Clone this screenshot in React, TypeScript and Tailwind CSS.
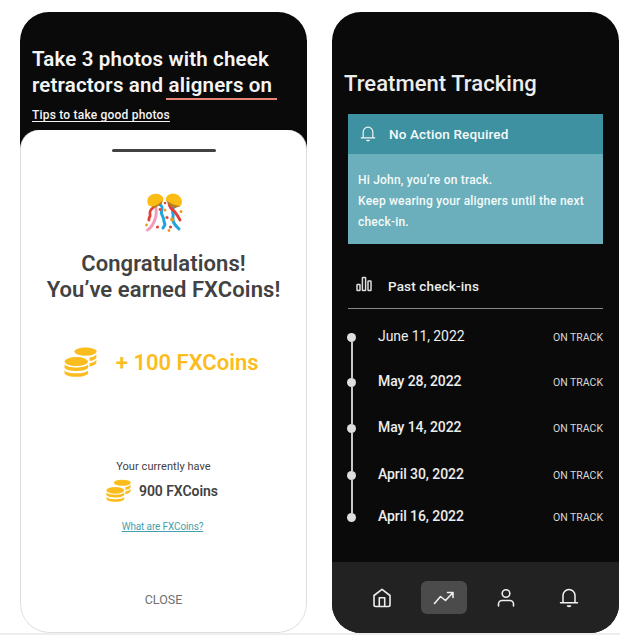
import React from "react";

const checkIns = [
  { date: "June 11, 2022", row: "h-[45px]", weight: "font-normal", last: false },
  { date: "May 28, 2022", row: "h-[46px]", weight: "font-medium", last: false },
  { date: "May 14, 2022", row: "h-[47px]", weight: "font-medium", last: false },
  { date: "April 30, 2022", row: "h-[42px]", weight: "font-medium", last: false },
  { date: "April 16, 2022", row: "h-[20px]", weight: "font-medium", last: true },
];

function Coins({ className }: { className: string }) {
  return (
    <svg viewBox="0 0 33 31" className={className} fill="#fbbd1e">
      <ellipse cx="21.5" cy="4.6" rx="11.2" ry="4.1" />
      <path d="M25.5 10.5Q30.5 9.8 32.4 7.4V10.5Q31.3 13 25.5 14.2ZM25.5 16.3Q30.5 15.4 32.4 13V15.8Q31.3 18.5 25.5 19.7Z" />
      <ellipse cx="12.3" cy="14.2" rx="13" ry="5.8" fill="#fff" />
      <ellipse cx="12.3" cy="14.6" rx="11.8" ry="4.5" />
      <path d="M.5 17.6C3.8 21.5 20.8 21.5 24.1 17.6V20.8C21.5 25.2 3.1 25.2.5 20.8Z" />
      <path d="M.5 23.4C3.8 27.3 20.8 27.3 24.1 23.4V26.4C21.5 31 3.1 31 .5 26.4Z" />
    </svg>
  );
}

function Confetti() {
  return (
    <svg viewBox="0 0 40 42" className="h-[42px] w-10" fill="none" strokeLinecap="round">
      <path d="M11 14C7 17 5 19 6 22S4 26 5 28" stroke="#df4038" strokeWidth="2.8" />
      <path d="M12 16Q13 24 10 30T3.5 38" stroke="#f29aba" strokeWidth="2.9" />
      <path d="M15 12C22 16 15 18 18 23S19 28 20.5 31 19 35 19 36" stroke="#20a4dc" strokeWidth="3" />
      <path d="M31 14C26 18 30 20 29 25S31 33 35 37" stroke="#20a4dc" strokeWidth="3" />
      <path d="M25 11C26 18 29 17 31 20S34 24 36 28" stroke="#df4038" strokeWidth="2.9" />
      <path d="M4.5 13.5C.5 5 8 .8 14 2 18.5 3 21 7 18.5 9.5Q13 17 4.5 13.5Z" fill="#fbbd13" />
      <path d="M7 15Q14 13.5 18.5 8.5L18 11.5 11 16Z" fill="#bd791c" />
      <path d="M23 9.5C20 7 23.5 1.5 29 1.5 36 2 40 8 37 13.5Q29 16 23 9.5Z" fill="#fbbd13" />
      <path d="M22 8Q28 13.5 37 14L31 16 25 13Z" fill="#bd791c" />
      <g fill="#e34742">
        <circle cx="21" cy="11" r="1.3" /><circle cx="16" cy="17.5" r="1.4" />
        <circle cx="23" cy="25.5" r="1.6" /><circle cx="13.5" cy="35" r="1.6" /><circle cx="26.5" cy="35" r="1.6" />
      </g>
      <g fill="#f09b25">
        <circle cx="21" cy="18" r="1.5" /><circle cx="37" cy="19.5" r="1.5" /><circle cx="28" cy="27.5" r="1.9" />
        <circle cx="2.5" cy="33" r="1.4" /><circle cx="25" cy="38.5" r="1.4" />
      </g>
    </svg>
  );
}

function Bell({ className }: { className: string }) {
  return (
    <svg viewBox="0 0 20 20" className={className} fill="none" stroke="#f3f4f4" strokeWidth="1.5" strokeLinecap="round" strokeLinejoin="round">
      <path d="M1.5 14.8H18.5M4 14.8V7.5A6 6 0 0 1 16 7.5V14.8" />
      <path d="M8.5 18Q10 19.2 11.5 18Z" fill="#f3f4f4" />
    </svg>
  );
}

function RewardScreen() {
  return (
    <section className="h-[621px] w-[287px] overflow-hidden rounded-[29px] bg-[linear-gradient(#0a0a0a_50%,#ffffff_50%)]">
      <header className="h-[118px] pl-3 pt-[34px] text-[#f4f4f4]">
        <h1 className="whitespace-nowrap text-[20.5px] font-semibold leading-[26px] tracking-[0.16px]">
          Take 3 photos with cheek<br />retractors and aligners on
        </h1>
        <div className="ml-[134px] h-[2px] w-[111px] bg-[#e98678]" />
        <a className="mt-[7px] block text-[12px] font-medium leading-4 tracking-[0.2px] underline underline-offset-2">Tips to take good photos</a>
      </header>
      <div className="flex h-[503px] flex-col items-center rounded-b-[29px] rounded-t-[19px] border border-t-0 border-[#dedede] bg-white pt-[19px] text-[#424242]">
        <div className="h-[3px] w-[104px] shrink-0 rounded-full bg-[#424242]" />
        <div className="mt-10 h-[42px]"><Confetti /></div>
        <h2 className="mt-[17px] whitespace-nowrap text-center text-[22px] font-semibold leading-[26px] tracking-[0.08px]">Congratulations!<br />You’ve earned FXCoins!</h2>
        <div className="mr-[5px] mt-[43px] flex h-8 w-[195px] items-center justify-between text-[#fbbd1e]">
          <Coins className="h-[31px] w-[33px]" />
          <span className="whitespace-nowrap text-[22px] font-semibold">+ 100 FXCoins</span>
        </div>
        <p className="mt-[81px] text-[11px] leading-4 tracking-[0.06px]">Your currently have</p>
        <div className="mr-[3px] mt-1 flex h-6 w-[112px] items-center justify-between">
          <Coins className="h-[24px] w-[25px]" />
          <span className="whitespace-nowrap text-[14px] font-semibold tracking-[-0.05px]">900 FXCoins</span>
        </div>
        <a className="mr-[2px] mt-4 text-[10px] leading-4 tracking-[-0.13px] text-[#459fae] underline underline-offset-1">What are FXCoins?</a>
        <button className="mt-[57px] text-[12.5px] leading-4 text-[#707070]">CLOSE</button>
      </div>
    </section>
  );
}

function TrackingScreen() {
  return (
    <section className="flex h-[621px] w-[287px] flex-col overflow-hidden rounded-[29px] bg-[#0a0a0a] text-[#ededed]">
      <h1 className="mt-[58px] h-7 whitespace-nowrap pl-3 text-[22px] font-medium leading-7 tracking-[0.05px]">Treatment Tracking</h1>
      <article className="ml-4 mt-4 h-[130px] w-[255px] bg-[#6aafbb] text-[#f5fafa]">
        <div className="flex h-[40px] items-center bg-[#3e91a1] pl-3">
          <Bell className="h-4 w-4" />
          <h2 className="ml-[13px] text-[13.5px] font-medium tracking-[0.14px]">No Action Required</h2>
        </div>
        <p className="whitespace-nowrap pl-[10px] pt-4 text-[12px] font-medium leading-[21px] tracking-[0.2px]">Hi John, you’re on track.<br />Keep wearing your aligners until the next<br />check-in.</p>
      </article>
      <div className="ml-4 mt-[30px] flex h-[35px] w-[255px] border-b border-[#888888] pl-2">
        <svg viewBox="0 0 16 16" className="mt-[2px] h-4 w-4" fill="none" stroke="#dedede" strokeWidth="1.5">
          <rect x="1" y="8.5" width="3" height="6" rx=".6" /><rect x="6.4" y="1.5" width="3.2" height="13" rx=".6" /><rect x="12" y="5" width="3" height="9.5" rx=".6" />
        </svg>
        <h2 className="ml-4 mt-[2px] text-[13.5px] font-medium leading-5 tracking-[0.15px]">Past check-ins</h2>
      </div>
      <div className="ml-[15px] mt-[17px] w-64">
        {checkIns.map((item) => (
          <div key={item.date} className={`flex ${item.row}`}>
            <div className="flex w-[9px] flex-col items-center">
              <div className={item.date.startsWith("June") ? "h-[7px] w-[2px]" : "h-[7px] w-[2px] bg-[#c8c8c8]"} />
              <div className="h-[9px] w-[9px] shrink-0 rounded-full bg-[#dedede]" />
              {!item.last && <div className="w-[2px] grow bg-[#c8c8c8]" />}
            </div>
            <span className={`ml-[22px] text-[14px] leading-5 tracking-[-0.08px] ${item.weight}`}>{item.date}</span>
            <span className="ml-auto pt-[3px] text-[10.5px] leading-[18px] text-[#d8d8d8]">ON TRACK</span>
          </div>
        ))}
      </div>
      <nav className="mt-auto flex h-[71px] items-center bg-[#222222] pl-[39px]">
        <svg viewBox="0 0 22 22" className="h-[22px] w-[22px]" fill="none" stroke="#eeeeee" strokeWidth="1.6" strokeLinejoin="round">
          <path d="M3 8.5 11 2.3l8 6.2v9.3a1.7 1.7 0 0 1-1.7 1.7H4.7A1.7 1.7 0 0 1 3 17.8Z" /><path d="M8.3 19.5v-8.7h5.4v8.7" />
        </svg>
        <div className="ml-7 flex h-[33px] w-[46px] items-center justify-center rounded-md bg-[#4b4b4b]">
          <svg viewBox="0 0 22 16" className="h-4 w-[22px]" fill="none" stroke="#eeeeee" strokeWidth="1.6" strokeLinecap="round" strokeLinejoin="round"><path d="m1.5 13.5 6-7 5 4L20 2.5M14.5 2.5H20v5" /></svg>
        </div>
        <svg viewBox="0 0 20 20" className="ml-[29px] h-5 w-5" fill="none" stroke="#eeeeee" strokeWidth="1.6" strokeLinecap="round"><circle cx="10" cy="5.5" r="3.8" /><path d="M2.5 18v-2a3.5 3.5 0 0 1 3.5-3.5h8a3.5 3.5 0 0 1 3.5 3.5v2" /></svg>
        <Bell className="ml-[43px] h-5 w-5" />
      </nav>
    </section>
  );
}

export default function App() {
  return (
    <main className="h-[635px] w-[636px] overflow-hidden bg-white pt-3 font-['Roboto',sans-serif]">
      <div className="flex gap-[25px] pl-5"><RewardScreen /><TrackingScreen /></div>
      <div className="h-[2px] w-[620px] bg-[#eeeeee]" />
    </main>
  );
}
